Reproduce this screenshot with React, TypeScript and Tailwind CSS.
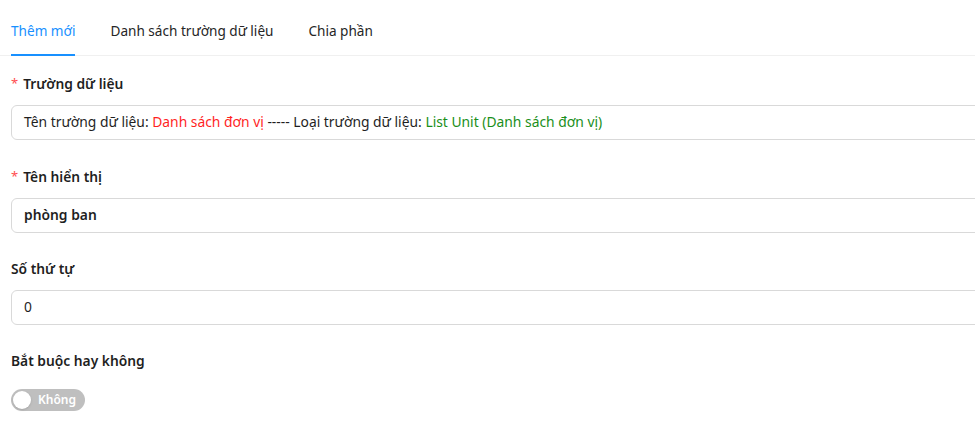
import React, { useState } from "react";

const tabs = ["Thêm mới", "Danh sách trường dữ liệu", "Chia phần"];

const Label: React.FC<{ text: string; required?: boolean }> = ({ text, required }) => (
  <div className="flex items-center h-[22px] text-[13.8px] font-semibold text-[#1f1f1f]">
    {required && <span className="text-[#ff4d4f] mr-[5px] text-[13px] font-normal">*</span>}
    {text}
  </div>
);

const App: React.FC = () => {
  const [active, setActive] = useState(0);
  const [required, setRequired] = useState(false);

  return (
    <div
      className="w-screen h-[422px] overflow-hidden bg-white text-[#1f1f1f]"
      style={{ fontFamily: '"Noto Sans", "Open Sans", sans-serif' }}
    >
      <div className="w-[1010px]">
        {/* tabs */}
        <div className="flex gap-[35px] pl-[11px] border-b border-[#f0f0f0] h-[56px]">
          {tabs.map((t, i) => (
            <button
              key={t}
              onClick={() => setActive(i)}
              className={`relative h-full pt-[7px] text-[13.6px] ${
                active === i ? "text-[#1890ff]" : "text-[#262626]"
              }`}
            >
              {t}
              {active === i && (
                <span className="absolute left-0 right-0 bottom-[-1px] h-[2px] bg-[#1890ff]" />
              )}
            </button>
          ))}
        </div>

        <div className="pl-[11px] pt-[17px]">
          <Label text="Trường dữ liệu" required />
          <div className="mt-[10px] h-[35px] border border-[#d9d9d9] rounded-[6px] flex items-center px-[12px] text-[13.85px]">
            <span>Tên trường dữ liệu:&nbsp;</span>
            <span className="text-[#ff1f1f]">Danh sách đơn vị</span>
            <span>&nbsp;----- Loại trường dữ liệu:&nbsp;</span>
            <span className="text-[#1a8f1a]">List Unit (Danh sách đơn vị)</span>
          </div>

          <div className="mt-[26px]">
            <Label text="Tên hiển thị" required />
          </div>
          <div className="mt-[10px] h-[35px] border border-[#d9d9d9] rounded-[6px] flex items-center px-[12px] text-[13.85px] font-semibold">
            phòng ban
          </div>

          <div className="mt-[25px]">
            <Label text="Số thứ tự" />
          </div>
          <div className="mt-[10px] h-[35px] border border-[#d9d9d9] rounded-[6px] flex items-center px-[12px] text-[13.85px]">
            0
          </div>

          <div className="mt-[25px]">
            <Label text="Bắt buộc hay không" />
          </div>
          <button
            onClick={() => setRequired(!required)}
            className={`mt-[17px] h-[22px] w-[74px] rounded-full flex items-center px-[2px] ${
              required ? "bg-[#1677ff] flex-row-reverse" : "bg-[#bfbfbf]"
            }`}
          >
            <span className="w-[18px] h-[18px] rounded-full bg-white shadow-sm" />
            <span className="flex-1 text-center text-[12px] font-semibold text-white">
              {required ? "Có" : "Không"}
            </span>
          </button>
        </div>
      </div>
    </div>
  );
};

export default App;
